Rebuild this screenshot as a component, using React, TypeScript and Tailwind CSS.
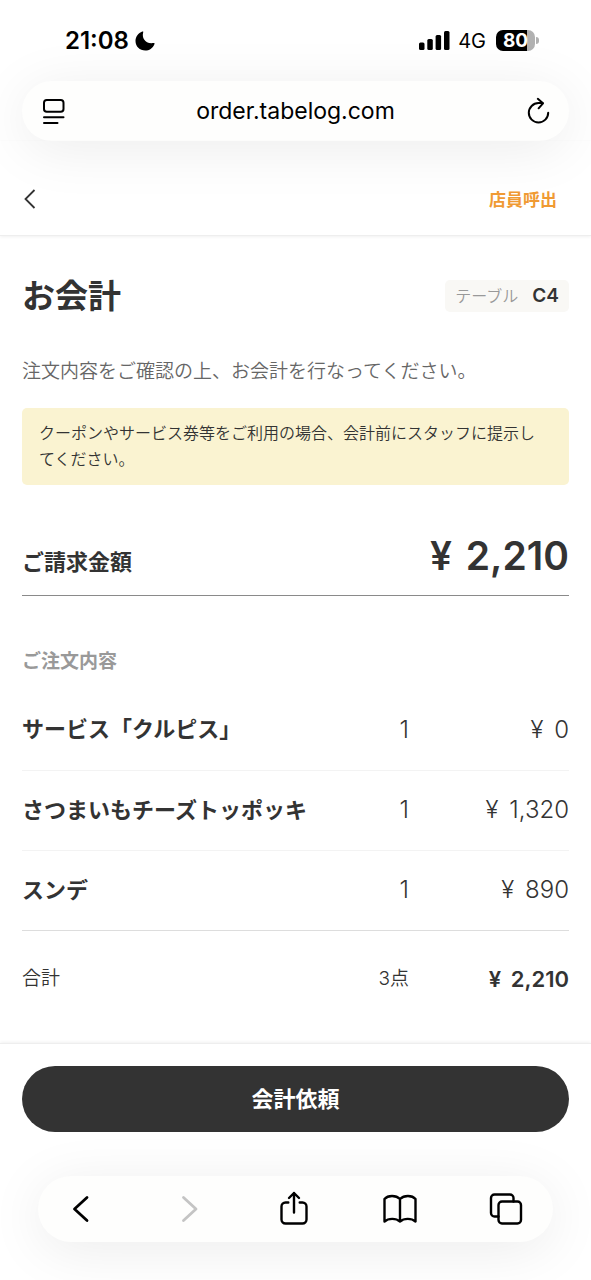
import type { ReactNode } from "react";

type OrderItem = {
  name: string;
  quantity: number;
  price: number;
};

const ORDER_ITEMS: OrderItem[] = [
  { name: "サービス「クルピス」", quantity: 1, price: 0 },
  { name: "さつまいもチーズトッポッキ", quantity: 1, price: 1320 },
  { name: "スンデ", quantity: 1, price: 890 },
];

function Price({ value }: { value: number }) {
  return (
    <>
      <span className="mr-1">¥</span> {value.toLocaleString("en-US")}
    </>
  );
}

function StatusBar() {
  return (
    <div className="flex h-[81px] items-center justify-between pr-[52px] pl-[65px] text-black">
      <div className="flex items-center gap-[6px]">
        <span className="text-[24px] leading-8 font-semibold">21:08</span>
        <svg viewBox="0 0 20 20" className="size-5" fill="currentColor" aria-hidden="true">
          <path d="M7.3.6C8 .2 8.500.6 8.200 1.300 6.600 6.700 10 13.300 18.600 12.100c.8-.1 1.200.4.8 1.100C17.700 17.300 14.200 19.600 10.300 19.600 4.700 19.600.5 15.500.5 10.100.5 5.900 3.300 2.100 7.300.6Z" />
        </svg>
      </div>
      <div className="flex items-center">
        <svg viewBox="0 0 31 20" className="h-5 w-[31px]" fill="currentColor" aria-hidden="true">
          <rect x="0" y="11.500" width="5.500" height="7.500" rx="1.500" />
          <rect x="8.300" y="8" width="5.500" height="11" rx="1.500" />
          <rect x="16.600" y="4" width="5.500" height="15" rx="1.500" />
          <rect x="25" y="0" width="5.500" height="19" rx="1.500" />
        </svg>
        <span className="ml-2 text-[20px] leading-6">4G</span>
        <div className="ml-[10px] flex items-center gap-px">
          <div className="flex h-[21px] w-[39px] items-center justify-center rounded-[7px] bg-linear-to-r from-black from-80% to-[#b1b1b1] to-80% text-[19px] leading-5 font-bold text-white">
            80
          </div>
          <div className="h-[7px] w-[3px] rounded-r-full bg-[#b1b1b1]" />
        </div>
      </div>
    </div>
  );
}

function AddressBar() {
  return (
    <div className="mx-[22px] flex h-[60px] items-center justify-between rounded-full bg-[#fefefd] px-[18px] text-black shadow-[0_8px_56px_rgba(0,0,0,0.08)]">
      <button type="button" aria-label="ページメニュー">
        <svg viewBox="0 0 28 28" className="size-7" fill="none" stroke="currentColor" strokeWidth="2" strokeLinecap="round" aria-hidden="true">
          <rect x="4" y="3" width="19.500" height="11.800" rx="2.800" />
          <path d="M4 20.200h19.500M4 26h13.500" />
        </svg>
      </button>
      <span className="text-[23px] leading-8">order.tabelog.com</span>
      <button type="button" aria-label="再読み込み">
        <svg viewBox="0 0 28 28" className="size-7" fill="none" stroke="currentColor" strokeWidth="2" strokeLinecap="round" strokeLinejoin="round" aria-hidden="true">
          <path d="M25.200 15.800A9.700 9.700 0 1 1 15.500 6.100h4" />
          <path d="M14.800 1.800 20 6.300 15.600 11.300" />
        </svg>
      </button>
    </div>
  );
}

function ToolbarButton({ label, disabled, children }: { label: string; disabled?: boolean; children: ReactNode }) {
  return (
    <button type="button" aria-label={label} disabled={disabled} className="text-black disabled:text-[#c4c4c4]">
      <svg viewBox="0 0 34 36" className="h-9 w-[34px]" fill="none" stroke="currentColor" strokeWidth="2.400" strokeLinecap="round" strokeLinejoin="round" aria-hidden="true">
        {children}
      </svg>
    </button>
  );
}

function BrowserToolbar() {
  return (
    <nav className="mx-[38px] flex h-[66px] items-center justify-between rounded-full bg-[#fefefd] pr-[30px] pl-[27px] shadow-[0_8px_56px_rgba(0,0,0,0.08)]">
      <ToolbarButton label="戻る">
        <path d="M22 6.500 9.500 18 22 29.500" strokeWidth="2.800" />
      </ToolbarButton>
      <ToolbarButton label="進む" disabled>
        <path d="M12.500 6.500 25 18 12.500 29.500" strokeWidth="2.800" />
      </ToolbarButton>
      <ToolbarButton label="共有">
        <path d="M11.300 11.500H8.500a4 4 0 0 0-4 4v13a4 4 0 0 0 4 4h17a4 4 0 0 0 4-4v-13a4 4 0 0 0-4-4h-2.800" />
        <path d="M17 21.500V2M12 7l5-5 5 5" />
      </ToolbarButton>
      <ToolbarButton label="ブックマーク">
        <path d="M17 8C13 4 5 4 1.500 8v22.500c4-3.500 11.500-3.500 15.500 0 4-3.500 11.500-3.500 15.500 0V8C29 4 21 4 17 8Zm0 0v22.500" />
      </ToolbarButton>
      <ToolbarButton label="タブ">
        <path d="M9.500 25.500H5.500a3.500 3.500 0 0 1-3.500-3.500V7a3.500 3.500 0 0 1 3.500-3.500h15.500A3.500 3.500 0 0 1 24.500 7v3.500" />
        <rect x="9.500" y="10.500" width="22.500" height="22" rx="3.500" />
      </ToolbarButton>
    </nav>
  );
}

export default function App() {
  const totalQuantity = ORDER_ITEMS.reduce((sum, item) => sum + item.quantity, 0);
  const totalPrice = ORDER_ITEMS.reduce((sum, item) => sum + item.price, 0);

  return (
    <div className="flex min-h-screen flex-col overflow-hidden bg-white font-['Inter','Noto_Sans_CJK_JP',sans-serif] text-[#333]">
      <StatusBar />
      <AddressBar />

      <header className="flex items-center justify-between border-b border-[#eee] px-[22px] pt-[34px] pb-3 shadow-[0_1px_3px_rgba(0,0,0,0.06)]">
        <button type="button" aria-label="前の画面へ" className="flex h-12 items-center">
          <svg viewBox="0 0 16 20" className="h-5 w-4" fill="none" stroke="currentColor" strokeWidth="1.800" aria-hidden="true">
            <path d="M12.500 1 3.500 10l9 9" />
          </svg>
        </button>
        <button type="button" className="h-12 pt-1 pr-3 text-[17px] font-bold text-[#f09a33]">
          店員呼出
        </button>
      </header>

      <main className="grow px-[22px] pt-9">
        <div className="flex items-center justify-between">
          <h1 className="text-[33px] leading-[48px] font-bold">お会計</h1>
          <p className="flex h-8 items-center gap-[14px] rounded-[5px] bg-[#f9f8f5] px-[10px]">
            <span className="text-[16px] font-[350] text-[#999]">テーブル</span>
            <span className="text-[19px] font-semibold">C4</span>
          </p>
        </div>

        <p className="mt-[38px] text-[19px] leading-7 font-[350] text-[#666]">
          注文内容をご確認の上、お会計を行なってください。
        </p>
        <p className="mt-[22px] rounded-[5px] bg-[#faf3d1] pt-3 pr-5 pb-[13px] pl-[17px] text-[16px] leading-[26px] font-[350]">
          クーポンやサービス券等をご利用の場合、会計前にスタッフに提示してください。
        </p>

        <div className="mt-[46px] flex items-baseline justify-between border-b border-[#8a8a8a] pb-[14px]">
          <h2 className="text-[22px] font-bold">ご請求金額</h2>
          <p className="text-[39px] leading-[50px] font-semibold">
            <Price value={totalPrice} />
          </p>
        </div>

        <h2 className="mt-[52px] mb-[14px] text-[19px] leading-7 font-bold text-[#999]">ご注文内容</h2>

        <table className="w-full text-[22px]">
          <tbody>
            {ORDER_ITEMS.map((item) => (
              <tr key={item.name} className="h-20 border-b border-[#f3f3f3] last:border-[#ddd]">
                <th scope="row" className="text-left font-bold">{item.name}</th>
                <td className="w-12 text-right text-[24px] font-light">{item.quantity}</td>
                <td className="w-40 text-right text-[24px] font-light">
                  <Price value={item.price} />
                </td>
              </tr>
            ))}
          </tbody>
          <tfoot>
            <tr className="h-[98px] text-[19px]">
              <th scope="row" className="text-left font-[350]">合計</th>
              <td className="text-right font-[350]">{totalQuantity}点</td>
              <td className="text-right text-[22px] font-semibold">
                <Price value={totalPrice} />
              </td>
            </tr>
          </tfoot>
        </table>
      </main>

      <footer className="mt-[14px] border-t border-[#eee] pt-[22px] pb-[38px] shadow-[0_-1px_3px_rgba(0,0,0,0.06)]">
        <div className="px-[22px] pb-11">
          <button type="button" className="h-[66px] w-full rounded-full bg-[#333] text-[22px] font-bold text-white">
            会計依頼
          </button>
        </div>
        <BrowserToolbar />
      </footer>
    </div>
  );
}
